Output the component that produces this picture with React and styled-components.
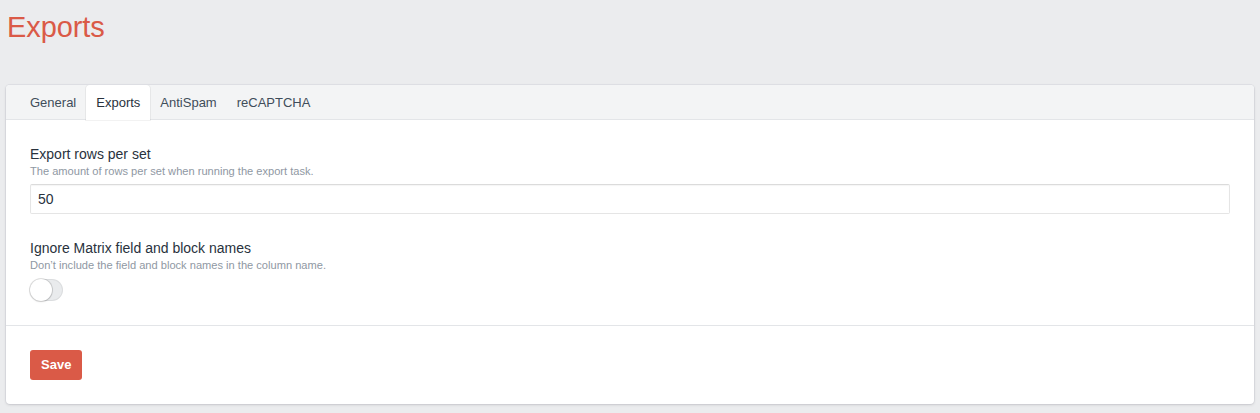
import React from "react";
import styled, { createGlobalStyle } from "styled-components";

const Global = createGlobalStyle`
  html, body { margin: 0; padding: 0; background: #ebecee; }
  body { font-family: "Liberation Sans", Arial, Helvetica, sans-serif; color: #29323d; }
  * { box-sizing: border-box; }
`;

const Page = styled.div`
  padding: 10px 6px 9px 6px;
`;

const Title = styled.h1`
  margin: 0 0 0 1px;
  font-size: 29px;
  line-height: 35px;
  font-weight: 400;
  color: #da5a47;
  letter-spacing: -0.1px;
`;

const Card = styled.div`
  margin-top: 40px;
  background: #fff;
  border-radius: 4px;
  box-shadow: 0 0 0 1px rgba(49, 49, 93, 0.05), 0 1px 3px rgba(0, 0, 0, 0.12);
  overflow: hidden;
`;

const TabBar = styled.div`
  display: flex;
  height: 35px;
  padding-left: 14px;
  background: #f3f4f5;
  border-bottom: 1px solid #e3e5e8;
`;

const Tab = styled.div`
  display: flex;
  align-items: center;
  padding: 0 10px;
  height: ${(p) => (p.$active ? "35px" : "34px")};
  font-size: 13px;
  color: ${(p) => (p.$active ? "#29323d" : "#3f4d5a")};
  background: ${(p) => (p.$active ? "#fff" : "transparent")};
  border-radius: 4px 4px 0 0;
  box-shadow: ${(p) => (p.$active ? "0 0 0 1px rgba(0,0,0,0.05)" : "none")};
  position: relative;
`;

const Body = styled.div`
  padding: 24px;
  display: flex;
  flex-direction: column;
  gap: 24px;
`;

const Field = styled.div`
  display: flex;
  flex-direction: column;
`;

const Label = styled.div`
  font-size: 14px;
  line-height: 20px;
  color: #29323d;
`;

const Hint = styled.div`
  font-size: 11.1px;
  line-height: 15.4px;
  color: #8f98a3;
  margin-bottom: 5px;
`;

const Input = styled.input`
  height: 30px;
  width: 100%;
  padding: 0 7px;
  font-family: "Liberation Sans", Arial, sans-serif;
  font-size: 14px;
  color: #29323d;
  border: 1px solid rgba(0, 0, 0, 0.1);
  border-top-color: rgba(0, 0, 0, 0.14);
  border-radius: 2px;
  box-shadow: inset 0 1px 1px rgba(0, 0, 0, 0.04);
  background: #fff;
  outline: none;
`;

const Toggle = styled.div`
  width: 33px;
  height: 22px;
  border-radius: 11px;
  background: #e9ebed;
  box-shadow: inset 0 0 0 1px rgba(0, 0, 0, 0.06);
  position: relative;
`;

const Knob = styled.div`
  position: absolute;
  left: 0;
  top: 0;
  width: 22px;
  height: 22px;
  border-radius: 50%;
  background: #fff;
  box-shadow: 0 0 0 1px rgba(0, 0, 0, 0.13), 0 1px 2px rgba(0, 0, 0, 0.1);
`;

const Footer = styled.div`
  border-top: 1px solid #e3e5e8;
  padding: 24px;
`;

const Button = styled.button`
  height: 30px;
  padding: 0 11px;
  border: none;
  border-radius: 3px;
  background: #da5a47;
  color: #fff;
  font-family: "Liberation Sans", Arial, sans-serif;
  font-weight: 700;
  font-size: 13px;
  cursor: pointer;
`;

export default function App() {
  const tabs = ["General", "Exports", "AntiSpam", "reCAPTCHA"];
  return (
    <>
      <Global />
      <Page>
        <Title>Exports</Title>
        <Card>
          <TabBar>
            {tabs.map((t) => (
              <Tab key={t} $active={t === "Exports"}>
                {t}
              </Tab>
            ))}
          </TabBar>
          <Body>
            <Field>
              <Label>Export rows per set</Label>
              <Hint>The amount of rows per set when running the export task.</Hint>
              <Input defaultValue="50" />
            </Field>
            <Field>
              <Label>Ignore Matrix field and block names</Label>
              <Hint>Don’t include the field and block names in the column name.</Hint>
              <Toggle>
                <Knob />
              </Toggle>
            </Field>
          </Body>
          <Footer>
            <Button>Save</Button>
          </Footer>
        </Card>
      </Page>
    </>
  );
}
